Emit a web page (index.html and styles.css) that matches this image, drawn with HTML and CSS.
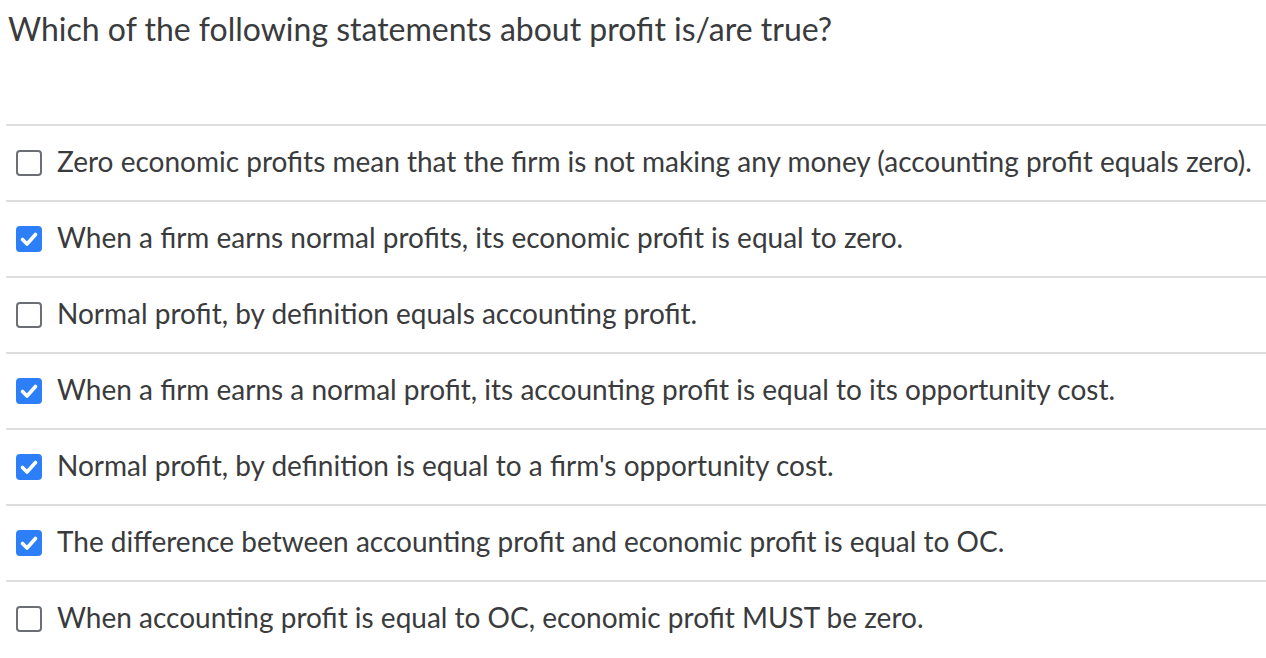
FILE: index.html
```html
<!DOCTYPE html>
<html>
<head>
<meta charset="utf-8">
<link rel="stylesheet" href="styles.css">
</head>
<body>
<div class="question">
  <h1 class="title">Which of the following statements about profit is/are true?</h1>
  <ul class="answers">
    <li class="answer"><span class="box"></span><span class="label">Zero economic profits mean that the firm is not making any money (accounting profit equals zero).</span></li>
    <li class="answer"><span class="box checked"><svg viewBox="0 0 26 26" width="26" height="26"><path d="M6.5 13.5 L11 18 L19.5 8.5" fill="none" stroke="#fff" stroke-width="3.6" stroke-linecap="round" stroke-linejoin="round"/></svg></span><span class="label">When a firm earns normal profits, its economic profit is equal to zero.</span></li>
    <li class="answer"><span class="box"></span><span class="label">Normal profit, by definition equals accounting profit.</span></li>
    <li class="answer"><span class="box checked"><svg viewBox="0 0 26 26" width="26" height="26"><path d="M6.5 13.5 L11 18 L19.5 8.5" fill="none" stroke="#fff" stroke-width="3.6" stroke-linecap="round" stroke-linejoin="round"/></svg></span><span class="label">When a firm earns a normal profit, its accounting profit is equal to its opportunity cost.</span></li>
    <li class="answer"><span class="box checked"><svg viewBox="0 0 26 26" width="26" height="26"><path d="M6.5 13.5 L11 18 L19.5 8.5" fill="none" stroke="#fff" stroke-width="3.6" stroke-linecap="round" stroke-linejoin="round"/></svg></span><span class="label">Normal profit, by definition is equal to a firm's opportunity cost.</span></li>
    <li class="answer"><span class="box checked"><svg viewBox="0 0 26 26" width="26" height="26"><path d="M6.5 13.5 L11 18 L19.5 8.5" fill="none" stroke="#fff" stroke-width="3.6" stroke-linecap="round" stroke-linejoin="round"/></svg></span><span class="label">The difference between accounting profit and economic profit is equal to OC.</span></li>
    <li class="answer"><span class="box"></span><span class="label">When accounting profit is equal to OC, economic profit MUST be zero.</span></li>
  </ul>
</div>
</body>
</html>
```
FILE: styles.css
```css
html, body {
  margin: 0;
  padding: 0;
  background: #fff;
}
body {
  font-family: Lato, "Liberation Sans", sans-serif;
  color: #3a3b3d;
}
.title {
  margin: 0;
  padding: 10px 0 0 8px;
  height: 124px;
  box-sizing: border-box;
  font-size: 32px;
  font-weight: 400;
  line-height: 38px;
  color: #3a3b3d;
}
.answers {
  list-style: none;
  margin: 0 0 0 6px;
  padding: 0;
}
.answer {
  display: flex;
  align-items: center;
  gap: 15px;
  height: 74px;
  border-top: 2px solid #dddddd;
  padding-left: 10px;
}
.box {
  flex: none;
  width: 26px;
  height: 26px;
  box-sizing: border-box;
  border: 2px solid #6b6f73;
  border-radius: 4px;
  background: #fff;
  display: flex;
}
.box.checked {
  border: none;
  background: #2d7ff9;
}
.label {
  font-size: 28px;
  line-height: 34px;
  margin-bottom: 5px;
}
```
